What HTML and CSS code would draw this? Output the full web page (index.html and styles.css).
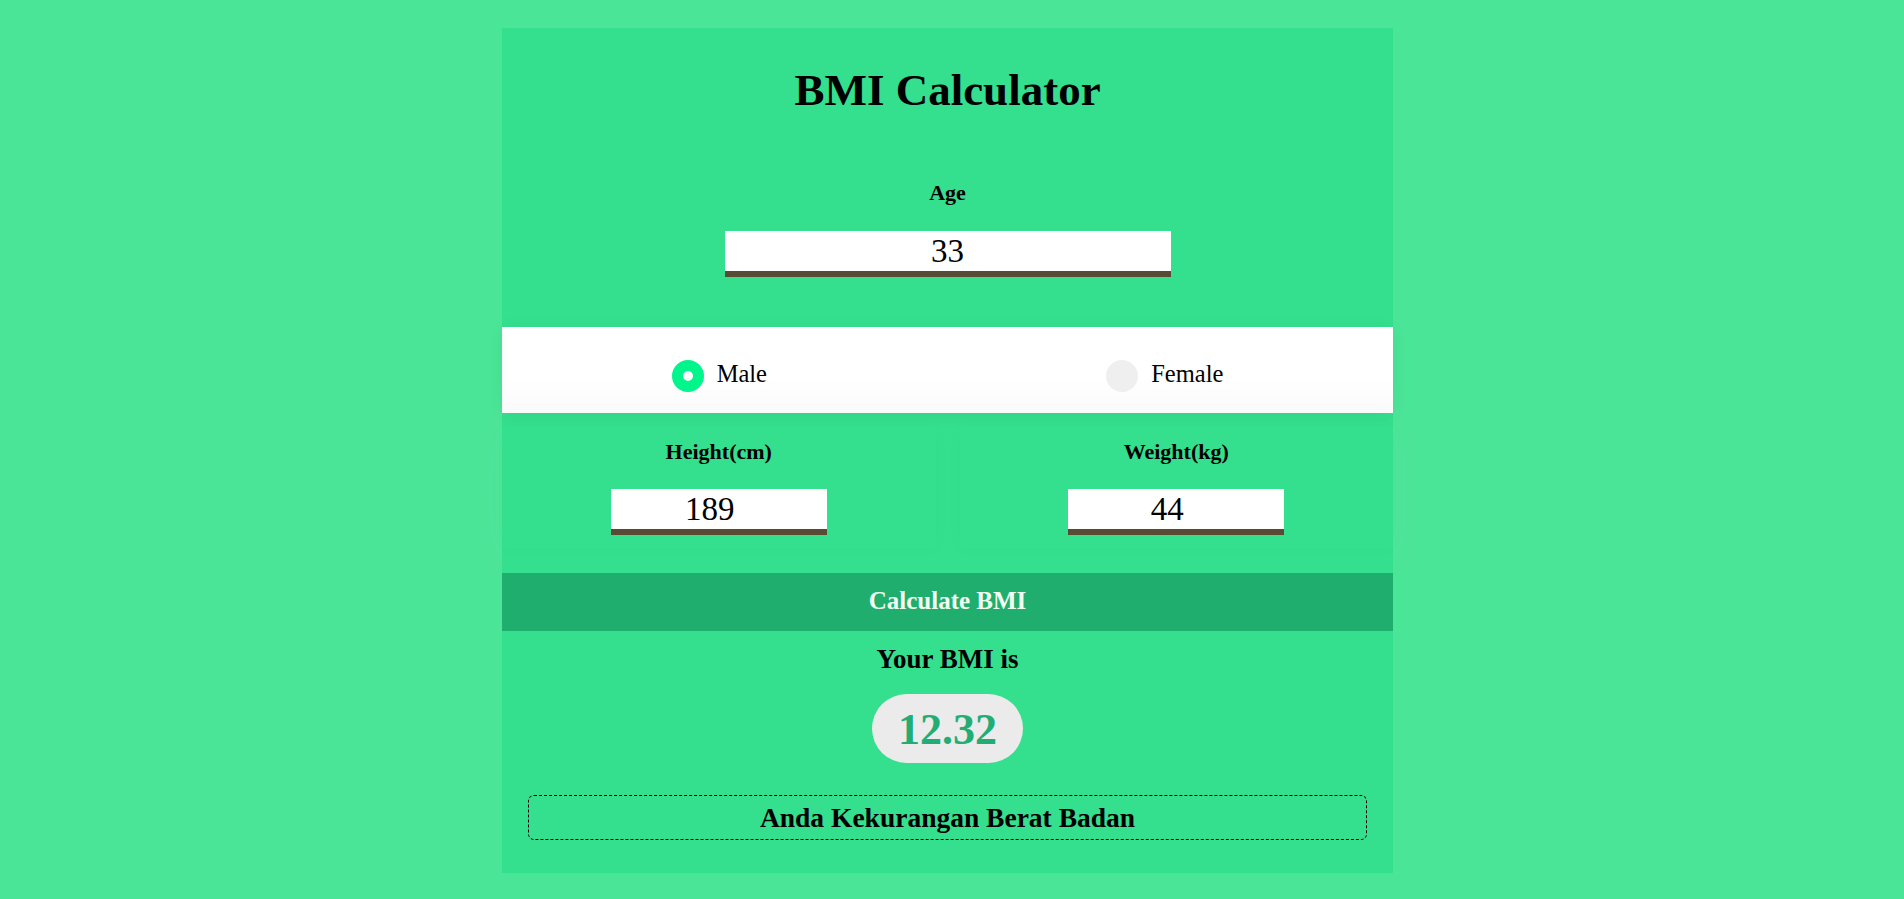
FILE: index.html
```html
<!DOCTYPE html>
<html lang="id">
<head>
<meta charset="utf-8">
<title>BMI Calculator</title>
<link rel="stylesheet" href="styles.css">
</head>
<body>
<main class="card">
  <h1 class="title">BMI Calculator</h1>
  <section class="age">
    <label class="label" for="age">Age</label>
    <input id="age" class="num num-age" type="text" value="33">
  </section>
  <section class="gender">
    <label class="radio"><span class="dot dot-on"></span><span class="radio-text">Male</span></label>
    <label class="radio"><span class="dot"></span><span class="radio-text">Female</span></label>
  </section>
  <section class="measures">
    <div class="col">
      <label class="label" for="height">Height(cm)</label>
      <input id="height" class="num num-small" type="text" value="189">
    </div>
    <div class="col">
      <label class="label" for="weight">Weight(kg)</label>
      <input id="weight" class="num num-small" type="text" value="44">
    </div>
  </section>
  <button class="calc" type="button">Calculate BMI</button>
  <section class="result">
    <h2 class="your">Your BMI is</h2>
    <div class="pill">12.32</div>
    <div class="verdict">Anda Kekurangan Berat Badan</div>
  </section>
</main>
</body>
</html>
```
FILE: styles.css
```css
* { box-sizing: border-box; }

html, body {
  margin: 0;
  padding: 0;
}

body {
  background: #4ae597;
  font-family: "Liberation Serif", "Times New Roman", serif;
  color: #000;
  padding-top: 28px;
  min-height: 899px;
}

.card {
  width: 891px;
  margin-left: calc(50% - 450px);
  background: #34df8e;
  padding: 36px 0 33px;
  display: flex;
  flex-direction: column;
}

.title {
  margin: 0;
  font-size: 45px;
  line-height: 52px;
  font-weight: bold;
  text-align: center;
}

.age {
  display: flex;
  flex-direction: column;
  align-items: center;
  padding: 64px 0 50px;
}

.label {
  font-size: 22px;
  line-height: 26px;
  font-weight: bold;
  text-align: center;
}

.num {
  display: block;
  margin-top: 25px;
  height: 46px;
  border: none;
  border-bottom: 6px solid #584b34;
  background: #fff;
  padding: 0;
  font-family: "Liberation Serif", "Times New Roman", serif;
  font-size: 33px;
  color: #000;
  text-align: center;
  outline: none;
}

.num-age { width: 446px; }

.num-small {
  width: 216px;
  margin-top: 24px;
  padding-right: 18px;
}

.gender {
  display: flex;
  justify-content: space-around;
  align-items: flex-start;
  padding: 33px 0 21px;
  background: linear-gradient(#ffffff 60%, #fafafa);
  box-shadow: 0 2px 16px rgba(0, 0, 0, 0.05);
  position: relative;
  z-index: 1;
}

.radio {
  display: flex;
  align-items: flex-start;
  gap: 13px;
}

.dot {
  width: 32px;
  height: 32px;
  border-radius: 50%;
  background: #efefef;
  flex: none;
}

.dot-on {
  background: #fff;
  border: 11px solid #00f58b;
}

.radio-text {
  font-size: 24.5px;
  line-height: 28px;
}

.measures {
  display: grid;
  grid-template-columns: 1fr 1fr;
  column-gap: 24px;
  padding: 13px 0 25px;
  box-shadow: 0 0 60px rgba(255, 255, 255, 0.06);
}

.col {
  display: flex;
  flex-direction: column;
  align-items: center;
  padding: 13px 0;
  box-shadow: 0 0 22px rgba(0, 0, 0, 0.02);
}

.calc {
  display: block;
  width: 100%;
  height: 58px;
  border: none;
  margin: 0;
  padding: 0 0 2px;
  background: #20ae6e;
  color: #f0fff0;
  font-family: "Liberation Serif", "Times New Roman", serif;
  font-size: 25px;
  font-weight: bold;
  line-height: 56px;
  text-align: center;
}

.result {
  display: flex;
  flex-direction: column;
  align-items: center;
  padding-top: 12px;
}

.your {
  margin: 0;
  font-size: 27px;
  line-height: 32px;
  font-weight: bold;
}

.pill {
  margin-top: 19px;
  padding: 14px 26px 11px;
  background: #ebebeb;
  border-radius: 35px;
  color: #22ad74;
  font-size: 44px;
  line-height: 44px;
  font-weight: bold;
}

.verdict {
  align-self: stretch;
  margin: 32px 26px 0;
  border: 1px dashed #000;
  border-radius: 6px;
  font-size: 27.5px;
  line-height: 43px;
  font-weight: bold;
  text-align: center;
}
```
